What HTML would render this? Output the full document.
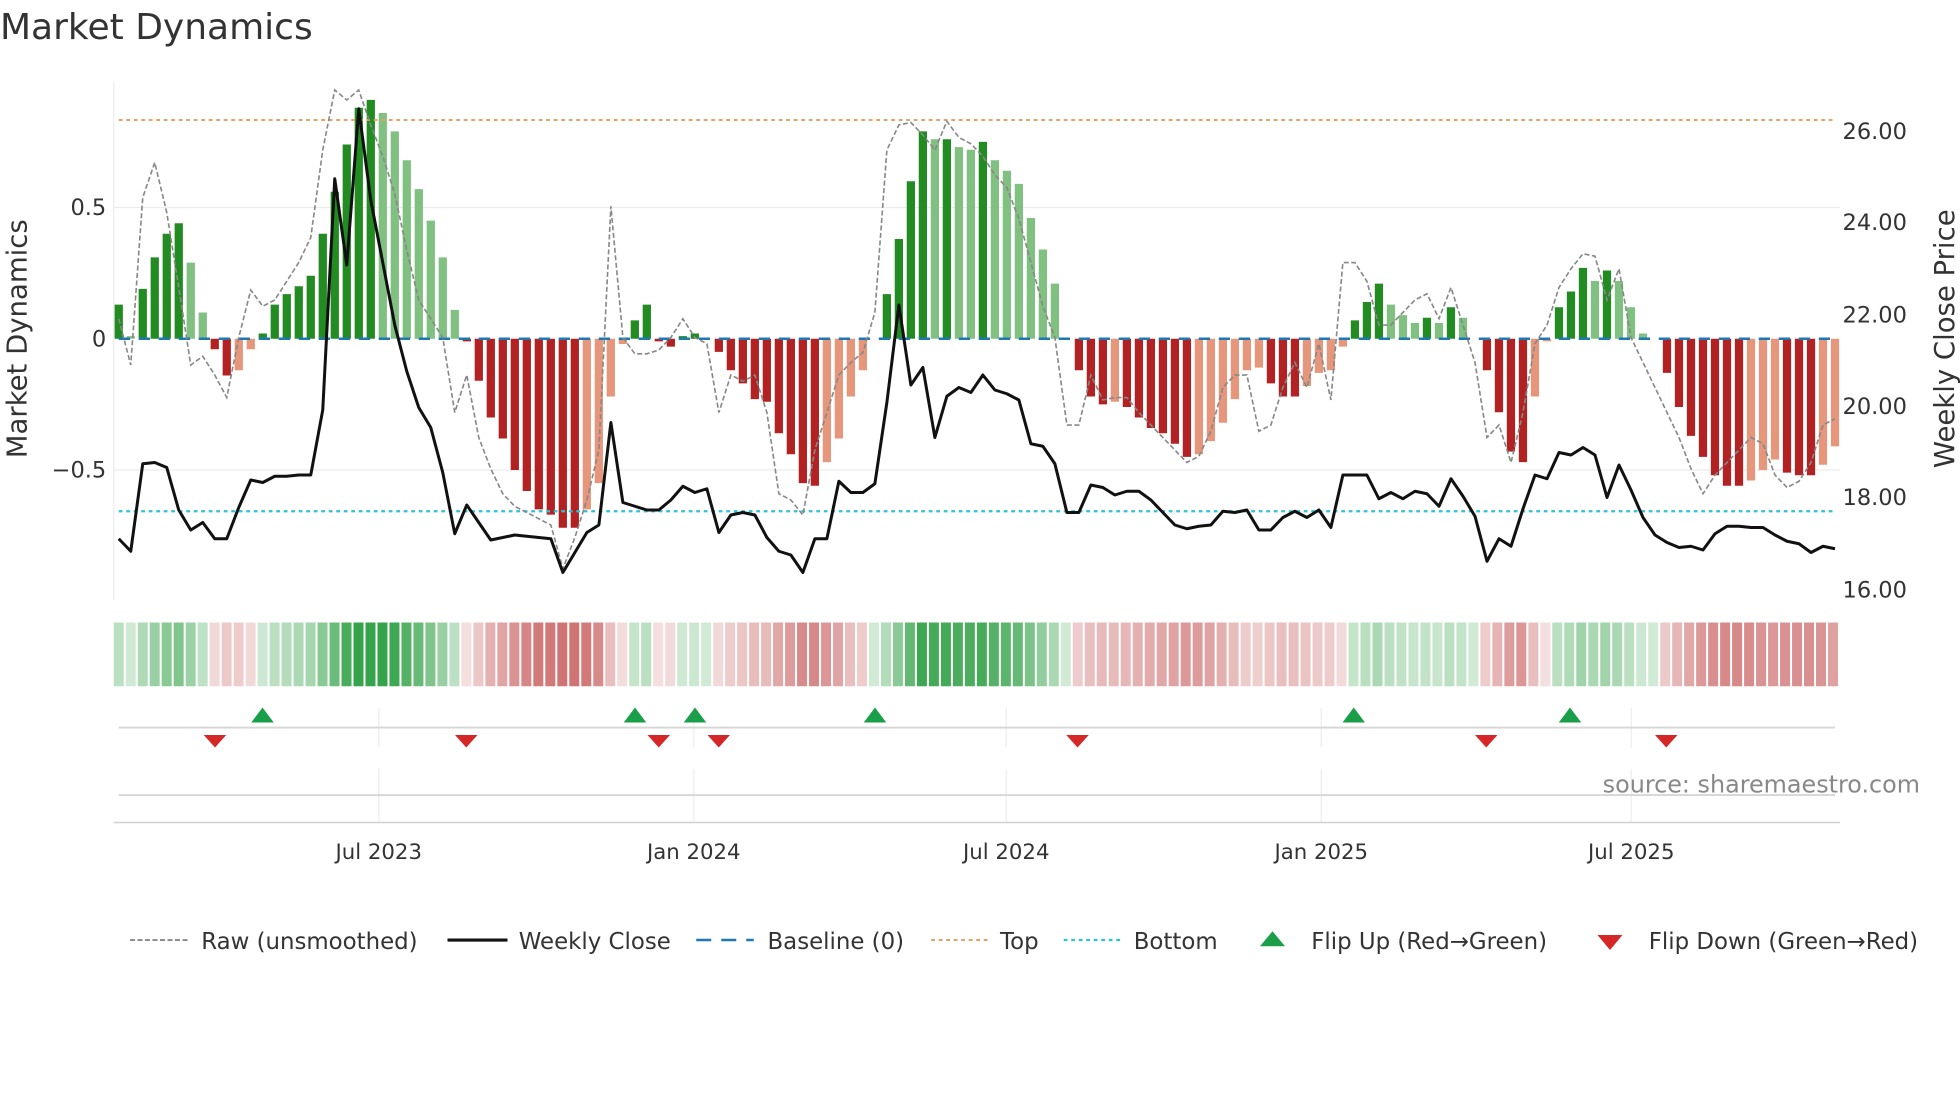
<!DOCTYPE html>
<html><head><meta charset="utf-8"><style>
html,body{margin:0;padding:0;background:#fff;}
svg{display:block;font-family:"DejaVu Sans","Liberation Sans",sans-serif;}
</style></head><body>
<svg id="s" width="1960" height="1102" viewBox="0 0 1568 881.6" xmlns="http://www.w3.org/2000/svg">
<rect width="1568" height="882" fill="#fff"/>
<text x="0" y="31" font-size="28.8" fill="#333">Market Dynamics</text>
<g stroke="#ececec" stroke-width="1">
<line x1="91" y1="166" x2="1472" y2="166"/>
<line x1="91" y1="376" x2="1472" y2="376"/>
<line x1="91" y1="65" x2="91" y2="480"/>
</g>
<g id="bars"></g>
<line x1="95" y1="96" x2="1468" y2="96" stroke="#e8a060" stroke-width="1.6" stroke-dasharray="3,3"/>
<line x1="95" y1="409" x2="1468" y2="409" stroke="#2bc4d4" stroke-width="1.8" stroke-dasharray="3,3"/>
<line x1="95" y1="271" x2="1468" y2="271" stroke="#1f77b4" stroke-width="2" stroke-dasharray="9,7"/>
<polyline id="raw" fill="none" stroke="#888" stroke-width="1.3" stroke-dasharray="4,2"/>
<polyline id="px" fill="none" stroke="#111" stroke-width="2.4" stroke-linejoin="round"/>
<g font-size="18" fill="#333">
<text x="85" y="172" text-anchor="end">0.5</text>
<text x="85" y="277" text-anchor="end">0</text>
<text x="85" y="382" text-anchor="end">−0.5</text>
<text x="1474" y="111">26.00</text>
<text x="1474" y="184">24.00</text>
<text x="1474" y="258">22.00</text>
<text x="1474" y="331">20.00</text>
<text x="1474" y="404">18.00</text>
<text x="1474" y="478">16.00</text>
</g>
<text transform="translate(21,271) rotate(-90)" text-anchor="middle" font-size="22" fill="#333">Market Dynamics</text>
<text transform="translate(1563,271) rotate(-90)" text-anchor="middle" font-size="22" fill="#333">Weekly Close Price</text>
<g id="strip"></g>
<g stroke="#eee" stroke-width="1">
<line x1="303" y1="566" x2="303" y2="598"/><line x1="555" y1="566" x2="555" y2="598"/><line x1="805" y1="566" x2="805" y2="598"/><line x1="1057" y1="566" x2="1057" y2="598"/><line x1="1305" y1="566" x2="1305" y2="598"/>
<line x1="303" y1="615" x2="303" y2="658"/><line x1="555" y1="615" x2="555" y2="658"/><line x1="805" y1="615" x2="805" y2="658"/><line x1="1057" y1="615" x2="1057" y2="658"/><line x1="1305" y1="615" x2="1305" y2="658"/>
</g>
<line x1="95" y1="582" x2="1468" y2="582" stroke="#d6d6d6" stroke-width="1.5"/>
<line x1="95" y1="636" x2="1468" y2="636" stroke="#d6d6d6" stroke-width="1.5"/>
<line x1="91" y1="658" x2="1472" y2="658" stroke="#d0d0d0" stroke-width="1.2"/>
<g id="flips"></g>
<text x="1536" y="634" text-anchor="end" font-size="19.1" fill="#888">source: sharemaestro.com</text>
<g font-size="17" fill="#333" text-anchor="middle">
<text x="303" y="687">Jul 2023</text><text x="555" y="687">Jan 2024</text><text x="805" y="687">Jul 2024</text><text x="1057" y="687">Jan 2025</text><text x="1305" y="687">Jul 2025</text>
</g>
<g font-size="18.3" fill="#333">
<line x1="104" y1="752" x2="150" y2="752" stroke="#888" stroke-width="1.5" stroke-dasharray="4,2"/>
<text x="161" y="759">Raw (unsmoothed)</text>
<line x1="358" y1="752" x2="406" y2="752" stroke="#111" stroke-width="2.5"/>
<text x="415" y="759">Weekly Close</text>
<line x1="557" y1="752" x2="603" y2="752" stroke="#1f77b4" stroke-width="2" stroke-dasharray="12,8"/>
<text x="614" y="759">Baseline (0)</text>
<line x1="745" y1="752" x2="790" y2="752" stroke="#e8a060" stroke-width="1.6" stroke-dasharray="3,3"/>
<text x="800" y="759">Top</text>
<line x1="851" y1="752" x2="896" y2="752" stroke="#2bc4d4" stroke-width="1.8" stroke-dasharray="3,3"/>
<text x="907" y="759">Bottom</text>
<polygon points="1008,757 1028,757 1018,745" fill="#1a9e4a"/>
<text x="1049" y="759">Flip Up (Red→Green)</text>
<polygon points="1278,748 1298,748 1288,760" fill="#d62728"/>
<text x="1319" y="759">Flip Down (Green→Red)</text>
</g>
</svg>
<script>
var V=[0.13,0.01,0.19,0.31,0.40,0.44,0.29,0.10,-0.04,-0.14,-0.12,-0.04,0.02,0.13,0.17,0.20,0.24,0.40,0.56,0.74,0.88,0.91,0.86,0.79,0.68,0.57,0.45,0.31,0.11,-0.01,-0.16,-0.30,-0.38,-0.50,-0.58,-0.65,-0.67,-0.72,-0.72,-0.65,-0.55,-0.22,-0.02,0.07,0.13,-0.01,-0.03,0.01,0.02,0.0,-0.05,-0.12,-0.17,-0.23,-0.24,-0.36,-0.44,-0.55,-0.56,-0.47,-0.38,-0.22,-0.12,0.0,0.17,0.38,0.60,0.79,0.76,0.76,0.73,0.72,0.75,0.68,0.64,0.59,0.46,0.34,0.21,0.0,-0.12,-0.22,-0.25,-0.24,-0.26,-0.30,-0.34,-0.36,-0.40,-0.45,-0.44,-0.39,-0.32,-0.23,-0.12,-0.11,-0.17,-0.22,-0.22,-0.18,-0.13,-0.12,-0.03,0.07,0.14,0.21,0.13,0.09,0.06,0.08,0.06,0.12,0.08,0.0,-0.12,-0.28,-0.43,-0.47,-0.22,-0.01,0.12,0.18,0.27,0.22,0.26,0.22,0.12,0.02,0.0,-0.13,-0.26,-0.37,-0.45,-0.52,-0.56,-0.56,-0.54,-0.50,-0.46,-0.51,-0.52,-0.52,-0.48,-0.41];
var P=[431,441,371,370,374,408,424,418,431,431,406,384,386,381,381,380,380,328,143,212,87,160,210,260,297,326,342,378,427,404,418,432,430,428,429,430,431,458,442,426,420,338,402,405,408,408,400,389,394,391,426,412,410,412,430,441,444,458,431,431,385,394,394,387,322,244,308,294,350,317,310,314,300,312,315,320,355,357,371,410,410,388,390,396,393,393,400,410,420,423,421,420,409,410,408,424,424,414,409,414,408,422,380,380,380,399,394,399,393,395,405,383,397,413,449,431,437,407,380,383,362,364,358,364,398,372,392,414,428,434,438,437,440,427,421,421,422,422,428,433,435,442,437,439];
var R=[255,292,158,130,170,230,292,285,300,318,270,232,245,240,225,210,190,120,72,80,72,100,125,155,200,240,255,270,330,300,350,375,395,405,410,415,420,455,430,400,360,165,270,283,283,280,270,255,270,275,330,300,305,300,330,395,400,412,360,330,300,290,282,250,120,100,98,108,120,97,110,115,125,140,150,175,210,245,270,340,340,300,320,318,318,330,340,350,360,370,365,345,310,300,300,345,340,310,290,310,275,320,210,210,225,260,260,250,240,235,255,230,260,290,350,340,370,330,275,260,230,215,203,205,240,215,270,290,310,330,350,375,395,380,370,360,350,355,380,390,385,370,340,335];
var n=V.length, x0=95, dx=(1468-95)/(n-1), NS="http://www.w3.org/2000/svg";
function el(t,a,p){var e=document.createElementNS(NS,t);for(var k in a)e.setAttribute(k,a[k]);p.appendChild(e);return e;}
var bg=document.getElementById('bars'), sg=document.getElementById('strip');
for(var i=0;i<n;i++){
 var v=V[i], pv=i?V[i-1]:0, x=x0+i*dx, h=Math.abs(v)*210, c;
 if(v>=0){c=(v>=pv)?'#228b22':'#80c080';}else{c=(v<=pv)?'#b22222':'#e6967a';}
 if(h>0.3) el('rect',{x:x-3.3,y:v>=0?271-h:271,width:6.6,height:h,fill:c},bg);
 var sx=91+i*((1472-91)/n), a;
 if(v>=0){a=0.22+0.75*Math.min(1,v/0.85);el('rect',{x:sx,y:498,width:(1381/n)-1.6,height:51,fill:'rgba(46,160,67,'+a.toFixed(2)+')'},sg);}
 else{a=0.18+0.62*Math.min(1,-v/0.7);el('rect',{x:sx,y:498,width:(1381/n)-1.6,height:51,fill:'rgba(196,80,80,'+a.toFixed(2)+')'},sg);}
}
var pp=[],rp=[];for(var i=0;i<n;i++){pp.push((x0+i*dx).toFixed(1)+','+P[i]);rp.push((x0+i*dx).toFixed(1)+','+R[i]);}
document.getElementById('px').setAttribute('points',pp.join(' '));
document.getElementById('raw').setAttribute('points',rp.join(' '));
var fg=document.getElementById('flips');
[210,508,556,700,1083,1256].forEach(function(x){el('polygon',{points:(x-9)+',578 '+(x+9)+',578 '+x+',566',fill:'#1a9e4a'},fg);});
[172,373,527,575,862,1189,1333].forEach(function(x){el('polygon',{points:(x-9)+',588 '+(x+9)+',588 '+x+',598',fill:'#d62728'},fg);});
</script>
</body></html>
